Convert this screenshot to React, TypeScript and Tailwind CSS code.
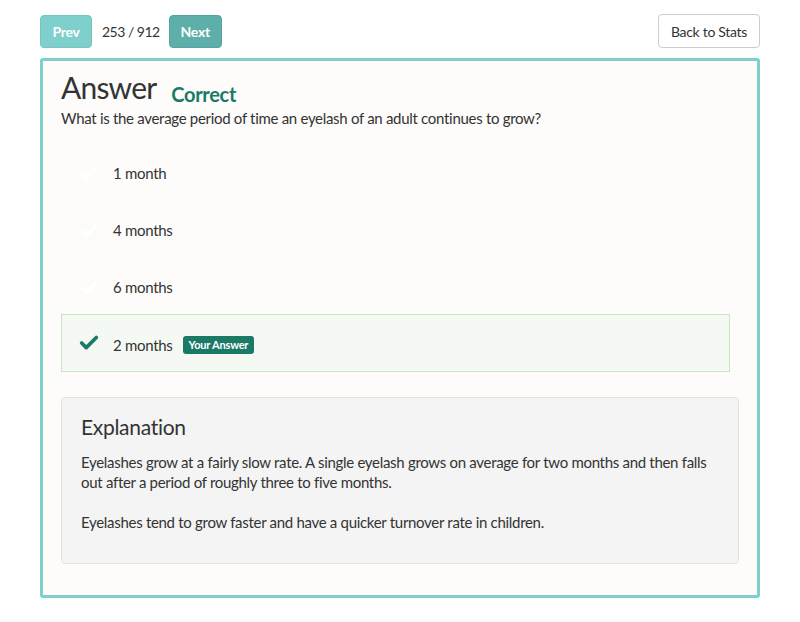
import { Check } from 'lucide-react';

const OPTIONS = ['1 month', '4 months', '6 months'];

export default function App() {
  return (
    <div className="min-h-[622px] bg-white px-[40px] pt-[14px] tracking-[-0.3px] text-[#333]" style={{ fontFamily: 'Lato, "Open Sans", sans-serif' }}>
      {/* Top bar */}
      <div className="flex items-center justify-between">
        <div className="flex items-center">
          <button className="h-[33px] w-[52px] rounded-[4px] border border-[#73c6c2] bg-[#7fcfcc] text-[14px] font-bold text-white">
            Prev
          </button>
          <span className="ml-[10px] mr-[9px] text-[14px] tracking-[-0.5px] text-[#333]">253 / 912</span>
          <button className="h-[33px] w-[53px] rounded-[4px] border border-[#55a5a2] bg-[#5eaeaa] text-[14px] font-bold text-white">
            Next
          </button>
        </div>
        <button className="h-[34px] w-[102px] rounded-[4px] border border-[#cccccc] bg-white text-[14px] text-[#333]">
          Back to Stats
        </button>
      </div>

      {/* Card */}
      <div className="mt-[10px] h-[540px] rounded-[3px] border-[3px] border-[#7fd0cb] bg-[#fdfcfa] px-[18px] pt-[8px]">
        <div className="flex items-end">
          <h1 className="text-[30px] leading-[36px] tracking-[-0.8px] text-[#333]">Answer</h1>
          <span className="mb-[-4px] ml-[15px] text-[20px] font-bold leading-[30px] text-[#1a7a66]">Correct</span>
        </div>
        <p className="mt-[2px] text-[15px] leading-[22px] text-[#333]">
          What is the average period of time an eyelash of an adult continues to grow?
        </p>

        <div className="mt-[14px] w-[669px]">
          {OPTIONS.map((o) => (
            <div key={o} className="flex h-[57px] items-center border border-transparent pl-[16px] pt-[4px]">
              <Check size={22} strokeWidth={4} className="text-white" />
              <span className="ml-[13px] text-[15px]">{o}</span>
            </div>
          ))}
          <div className="flex h-[58px] items-center border border-[#c9e6c3] bg-[#f4faf3] pl-[16px] pt-[4px]">
            <Check size={22} strokeWidth={4} className="-mt-[4px] text-[#1a7a66]" />
            <span className="ml-[13px] text-[15px]">2 months</span>
            <span className="ml-[10px] flex h-[18px] items-center rounded-[3px] bg-[#1a7a66] px-[6px] text-[11px] font-bold tracking-[-0.2px] text-white">
              Your Answer
            </span>
          </div>
        </div>

        <div className="mt-[25px] h-[167px] rounded-[4px] border border-[#e3e3e3] bg-[#f4f4f4] px-[19px] pt-[15px]">
          <h2 className="text-[21px] leading-[28px] text-[#333]">Explanation</h2>
          <p className="mt-[11px] text-[15px] leading-[20px]">
            Eyelashes grow at a fairly slow rate. A single eyelash grows on average for two months and then falls out after a period of roughly three to five months.
          </p>
          <p className="mt-[20px] text-[15px] leading-[20px]">
            Eyelashes tend to grow faster and have a quicker turnover rate in children.
          </p>
        </div>
      </div>
    </div>
  );
}
